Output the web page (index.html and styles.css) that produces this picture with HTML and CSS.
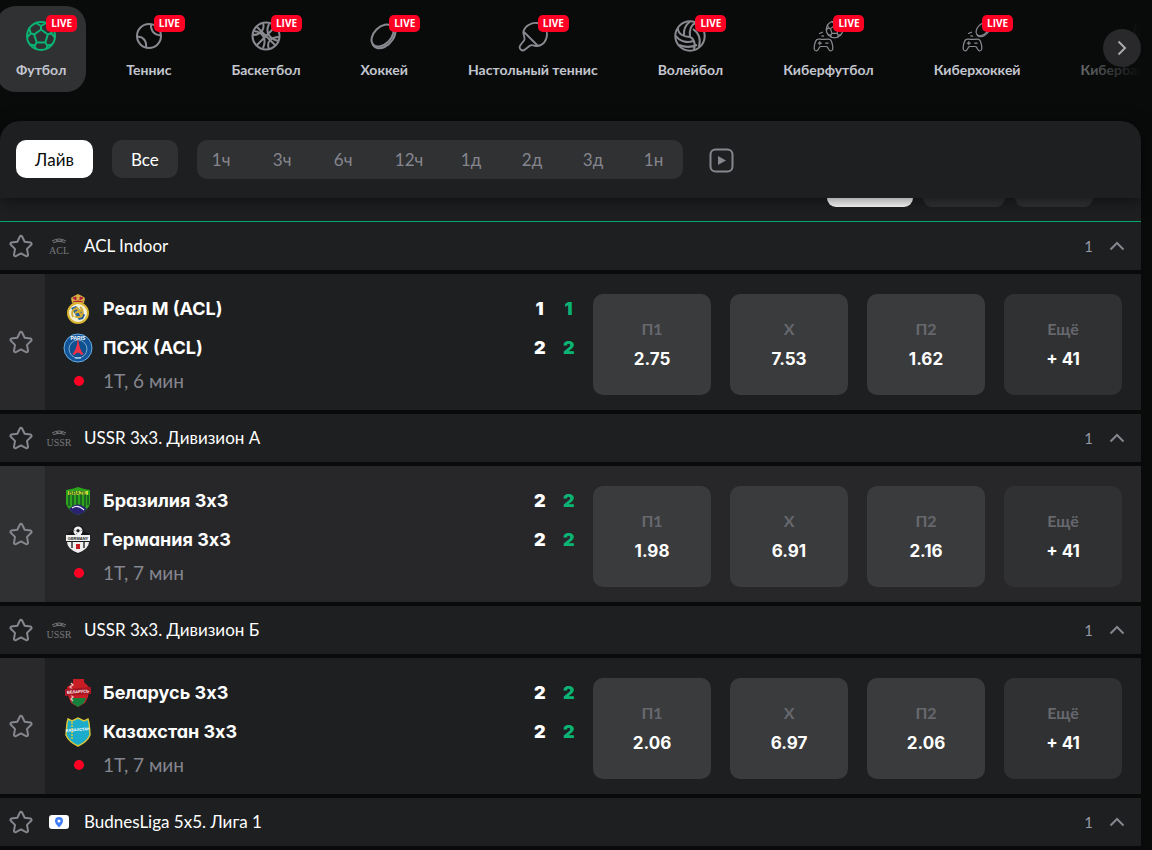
FILE: index.html
```html
<!DOCTYPE html>
<html lang="ru">
<head>
<meta charset="utf-8">
<title>Футбол — Лайв</title>
<link rel="stylesheet" href="styles.css">
</head>
<body>
<svg class="sprite" aria-hidden="true">
  <symbol id="star" viewBox="0 0 24 24"><path d="M12 1.800c.5 0 .9.3 1.100.7l2.600 5.300 5.800.8c1.100.2 1.500 1.400.7 2.200l-4.200 4.100 1 5.800c.2 1.100-.9 1.900-1.900 1.400L12 19.400l-5.100 2.700c-1 .5-2.100-.3-1.900-1.400l1-5.800-4.200-4.100c-.8-.8-.4-2 .7-2.200l5.800-.8 2.600-5.300c.2-.4.6-.7 1.100-.7z" fill="none" stroke="currentColor" stroke-width="2" stroke-linejoin="round"/></symbol>
  <symbol id="chevron" viewBox="0 0 16 10"><path d="M1.500 8.500 8 2l6.500 6.500" fill="none" stroke="currentColor" stroke-width="2"/></symbol>
  <symbol id="football" viewBox="0 0 32 32"><g fill="none" stroke="currentColor" stroke-width="2" stroke-linejoin="round"><circle cx="16" cy="16" r="14"/><path d="m16 9.500 6.800 5-2.500 8h-8.600l-2.500-8zM16 9.500V6l-5-3M16 6l5-3M22.800 14.500l3.500-1.200L28 7.500M26.300 13.300l3.500 4M20.300 22.500l2 3-1 3.500M22.300 25.500l5.200-1M11.700 22.500l-2 3 1 3.500M9.700 25.500l-5.200-1M9.200 14.500l-3.500-1.200L4 7.500M5.700 13.300l-3.500 4"/></g></symbol>
  <symbol id="hockey" viewBox="0 0 32 32"><g fill="none" stroke="currentColor" stroke-width="2"><ellipse cx="14.500" cy="15.500" rx="13" ry="8.500" transform="rotate(-45 14.500 15.500)"/><path d="M4.500 24c1.500 4 7 5.500 12 3 7-3.500 11.500-11 11-17-.4-2-1.500-3.500-3-4"/></g></symbol>
  <symbol id="gamepad" viewBox="0 0 32 32"><g fill="none" stroke="currentColor" stroke-width="1.200" stroke-linecap="round"><path d="M5 19.500c1.500-.8 3-.2 4.200-.2h4.600c1.200 0 2.700-.6 4.200.2 2.200 1.400 3.500 9 2.300 10.500-1 1.300-2.600 1-3.300-.2l-1.600-2.700c-.3-.4-.6-.6-1.100-.6H8.700c-.5 0-.8.2-1.100.6L6 29.800c-.7 1.200-2.300 1.500-3.300.2C1.500 28.500 2.800 20.900 5 19.500zM6.300 23.200h3M7.800 21.700v3M13.700 23.200h2.400M7.500 13.500l3-1.300M9.800 15.800l1.800.4"/></g></symbol>
  <symbol id="laurel" viewBox="0 0 26 18"><path d="M6 4q7-4 14 0M7 5.500q6-2.500 12 0M10 3q3 3 7 0" fill="none" stroke="currentColor"/></symbol>
</svg>
<main class="page">
  <nav class="sports" aria-label="Виды спорта">
    <a class="sport sport-active" href="#"><span class="sport-icon"><svg viewBox="0 0 32 32"><use href="#football"/></svg><span class="live">LIVE</span></span>Футбол</a>
    <a class="sport" href="#"><span class="sport-icon"><svg viewBox="0 0 32 32"><g fill="none" stroke="currentColor" stroke-width="2"><circle cx="16" cy="16" r="12"/><path d="M4 17c6-1 10 4 9 11M18 4c-.5 7 4 12 10 11"/></g></svg><span class="live">LIVE</span></span>Теннис</a>
    <a class="sport" href="#"><span class="sport-icon"><svg viewBox="0 0 32 32"><g fill="none" stroke="currentColor" stroke-width="2"><circle cx="16" cy="16" r="13.500"/><path d="M6.500 6.500l19 19M25.500 6.500l-19 19M13 3c2 6-2 12-10.500 12M29 17c-8 0-13 5-10 12M4 11c9 1 13 8 9 17M19 4c-4 8 0 15 9.500 17"/></g></svg><span class="live">LIVE</span></span>Баскетбол</a>
    <a class="sport" href="#"><span class="sport-icon"><svg viewBox="0 0 32 32"><use href="#hockey"/></svg><span class="live">LIVE</span></span>Хоккей</a>
    <a class="sport" href="#"><span class="sport-icon"><svg viewBox="0 0 32 32"><path d="M6.500 11C8 6 14 2.500 20 3c6 .5 10 6 10 11 0 7-4.500 12-10 12-3 0-5-2-7.500 0L8 29.500c-3 2.500-7-1-4.500-4.500L7 20.500c2-2.500-1.500-5.500-.5-9.500zM7 12l14 14" fill="none" stroke="currentColor" stroke-width="1.800"/></svg><span class="live">LIVE</span></span>Настольный теннис</a>
    <a class="sport" href="#"><span class="sport-icon"><svg viewBox="0 0 32 32"><g fill="none" stroke="currentColor" stroke-width="2"><circle cx="16" cy="16" r="14.700"/><path d="M16 17C15 10 17 5 22 2.500M10 15c-.5-5 1.500-10 6-13.500M4 8c-.5 6 6 9 12 9M2 16c4 6 12 7 17 5M5 25c6 2.500 12 2.500 18 0M16 17c3 1 6 5 4 13M19 9c6 4 8 10 6 18"/></g></svg><span class="live">LIVE</span></span>Волейбол</a>
    <a class="sport" href="#"><span class="sport-icon"><svg viewBox="0 0 32 32"><use href="#gamepad"/><use href="#football" x="13" width="19" height="19"/></svg><span class="live">LIVE</span></span>Киберфутбол</a>
    <a class="sport" href="#"><span class="sport-icon"><svg viewBox="0 0 32 32"><use href="#gamepad"/><use href="#hockey" x="13" width="19" height="19"/></svg><span class="live">LIVE</span></span>Киберхоккей</a>
    <a class="sport" href="#"><span class="sport-icon"><svg viewBox="0 0 32 32"><use href="#gamepad"/><use href="#football" x="13" width="19" height="19"/></svg></span>Кибербаскетбол</a>
    <span class="fade"></span>
    <button class="next" aria-label="Дальше"><svg viewBox="0 0 10 16"><path d="m1.500 1.500 6.500 6.500-6.500 6.500" fill="none" stroke="currentColor" stroke-width="2"/></svg></button>
  </nav>

  <section class="filters" aria-label="Фильтры">
    <button class="chip chip-live">Лайв</button>
    <button class="chip">Все</button>
    <div class="periods">
      <button>1ч</button><button>3ч</button><button>6ч</button><button class="wide">12ч</button><button>1д</button><button>2д</button><button>3д</button><button>1н</button>
    </div>
    <button class="video" aria-label="Видео"><svg viewBox="0 0 25 25"><rect x="1.500" y="1.500" width="22" height="22" rx="5" fill="none" stroke="currentColor" stroke-width="2"/><path d="m9 8 8 4.500L9 17z" fill="currentColor"/></svg></button>
  </section>

  <div class="tabs"><button class="tab tab-on" aria-label="Вкладка 1"></button><button class="tab tab-mid" aria-label="Вкладка 2"></button><button class="tab" aria-label="Вкладка 3"></button></div>

  <section class="list">
    <header class="league">
      <button class="fav" aria-label="В избранное"><svg><use href="#star"/></svg></button>
      <svg class="league-logo" viewBox="0 0 26 18"><use href="#laurel"/><text x="13" y="17" text-anchor="middle" class="crest-serif" font-size="10">ACL</text></svg>
      <h2>ACL Indoor</h2><span class="count">1</span>
      <button class="toggle" aria-label="Свернуть"><svg><use href="#chevron"/></svg></button>
    </header>
    <article class="match">
      <button class="fav" aria-label="В избранное"><svg><use href="#star"/></svg></button>
      <div class="teams">
        <div class="team"><svg class="crest" viewBox="0 0 30 30"><path d="M9 9 8 4l3-2 4-2 4 2 3 2-1 5z" fill="#d5ae3e"/><path d="m10 4 3 2V3zm7 2 3-2-3-1zm-7 2q5-2 10 0" fill="#b51f3c" stroke="#b51f3c"/><circle cx="15" cy="19" r="10" fill="#f3f0d8" stroke="#d9b532" stroke-width="2"/><path d="m8 14 5-2 9 9-2 4-4 1z" fill="#245e9c"/><path d="M10 23q-3-7 4-9l5 9M12 19l7-3M17 13q4 3 2 8-3 4-7 1" fill="none" stroke="#d1ab36" stroke-width="2"/></svg><span class="name">Реал М (ACL)</span><b>1</b><b class="now">1</b></div>
        <div class="team"><svg class="crest" viewBox="0 0 30 30"><circle cx="15" cy="15" r="14" fill="#125499" stroke="#6eafdf"/><circle cx="15" cy="16" r="9" fill="#11508f" stroke="#7aacd1"/><path d="M14.500 7h1q.5 9 5 14l-2 1q-3.500-5-7 0l-2-1q4.500-5 5-14z" fill="#ed3045"/><path d="m13 15 4 0" stroke="#ed3045" stroke-width="2"/><text x="15" y="7" text-anchor="middle" class="crest-sans" font-size="5" fill="#fff">PARIS</text><path d="m12 25 6 0" stroke="#d9e7f3"/></svg><span class="name">ПСЖ (ACL)</span><b>2</b><b class="now">2</b></div>
        <div class="clock"><i></i><span>1Т, 6 мин</span></div>
      </div>
      <div class="odds">
        <button>П1<strong>2.75</strong></button><button>X<strong>7.53</strong></button><button>П2<strong>1.62</strong></button><button class="more">Ещё<strong>+ 41</strong></button>
      </div>
    </article>

    <header class="league">
      <button class="fav" aria-label="В избранное"><svg><use href="#star"/></svg></button>
      <svg class="league-logo" viewBox="0 0 26 18"><use href="#laurel"/><text x="13" y="17" text-anchor="middle" class="crest-serif" font-size="10">USSR</text></svg>
      <h2>USSR 3x3. Дивизион А</h2><span class="count">1</span>
      <button class="toggle" aria-label="Свернуть"><svg><use href="#chevron"/></svg></button>
    </header>
    <article class="match match-hover">
      <button class="fav" aria-label="В избранное"><svg><use href="#star"/></svg></button>
      <div class="teams">
        <div class="team"><svg class="crest" viewBox="0 0 30 30"><path d="M3 4q7-1 12-3 5 2 12 3v14q-3 8-12 11Q6 26 3 18z" fill="#2ca51c"/><path d="M6 9v11M10 9v12M14 9v11M18 9v11M22 9v12M25 9v10" stroke="#174e27" stroke-width="1.500"/><path d="M6 23q9-9 18 0l-4 4-5 2-5-2z" fill="#2a2170"/><path d="M9 22q6-4 12 2" fill="none" stroke="#e8eaf6" stroke-width="1.200"/><path d="M5 5h20v4H5z" fill="#c9dc38"/><text x="15" y="9" text-anchor="middle" class="crest-sans" font-size="5" fill="#235d22">BRAZIL</text></svg><span class="name">Бразилия 3x3</span><b>2</b><b class="now">2</b></div>
        <div class="team"><svg class="crest" viewBox="0 0 30 30"><path d="M4 9 9 6l2-5h8l2 5 5 3v10q-3 7-11 10Q7 26 4 19z" fill="#15171a"/><circle cx="15" cy="6" r="4.500" fill="#f2f2f2"/><path d="m15 4 1.500 1.200-.6 1.800h-1.800l-.6-1.800zM11 5l1.500 1M19 5l-1.500 1M13 9.500l1-1.500" fill="#202124" stroke="#202124" stroke-width=".5"/><path d="M4 17h22q0 7-11 11Q4 24 4 17z" fill="#eee"/><path d="M9 17v6M21 17v6" stroke="#333" stroke-width="1.500"/><path d="M13 19h4v5h-4z" fill="#c51e22"/><path d="M3 10h24v6H3z" fill="#f1f1f1"/><text x="15" y="15" text-anchor="middle" class="crest-sans" font-size="4" fill="#202124">GERMANY</text></svg><span class="name">Германия 3x3</span><b>2</b><b class="now">2</b></div>
        <div class="clock"><i></i><span>1Т, 7 мин</span></div>
      </div>
      <div class="odds">
        <button>П1<strong>1.98</strong></button><button>X<strong>6.91</strong></button><button>П2<strong>2.16</strong></button><button class="more">Ещё<strong>+ 41</strong></button>
      </div>
    </article>

    <header class="league">
      <button class="fav" aria-label="В избранное"><svg><use href="#star"/></svg></button>
      <svg class="league-logo" viewBox="0 0 26 18"><use href="#laurel"/><text x="13" y="17" text-anchor="middle" class="crest-serif" font-size="10">USSR</text></svg>
      <h2>USSR 3x3. Дивизион Б</h2><span class="count">1</span>
      <button class="toggle" aria-label="Свернуть"><svg><use href="#chevron"/></svg></button>
    </header>
    <article class="match">
      <button class="fav" aria-label="В избранное"><svg><use href="#star"/></svg></button>
      <div class="teams">
        <div class="team"><svg class="crest" viewBox="0 0 30 30"><path d="M10 1h11v3l5 5-1 10-3 6-7 4-7-4-4-10V9l6-4z" fill="#c91d25"/><path d="M8 20h15l-2 5-6 4-6-4z" fill="#16813b"/><path d="m8 5 2 2-3 2 2 2-3 2m2 4 2 2-2 2 2 2" fill="none" stroke="#e8bcbc" stroke-width="1.300"/><path d="m2 11 26-2v7L2 18z" fill="#a91623"/><text x="15" y="15" text-anchor="middle" class="crest-sans" font-size="4" fill="#fff" transform="rotate(-4 15 15)">БЕЛАРУСЬ</text></svg><span class="name">Беларусь 3x3</span><b>2</b><b class="now">2</b></div>
        <div class="team"><svg class="crest" viewBox="0 0 30 30"><path d="M5 2 9 4l6-3 6 3 4-2 1 4 1 12q-3 7-12 11Q6 25 3 18L4 6z" fill="#1baccc" stroke="#d6c63a" stroke-width="1.500"/><path d="M9 5v18" stroke="#d6c63a" stroke-width="1.500" stroke-dasharray="2 1"/><text x="15" y="14" text-anchor="middle" class="crest-sans" font-size="4" fill="#fff" transform="rotate(-5 15 14)">КАЗАХСТАН</text></svg><span class="name">Казахстан 3x3</span><b>2</b><b class="now">2</b></div>
        <div class="clock"><i></i><span>1Т, 7 мин</span></div>
      </div>
      <div class="odds">
        <button>П1<strong>2.06</strong></button><button>X<strong>6.97</strong></button><button>П2<strong>2.06</strong></button><button class="more">Ещё<strong>+ 41</strong></button>
      </div>
    </article>

    <header class="league">
      <button class="fav" aria-label="В избранное"><svg><use href="#star"/></svg></button>
      <svg class="league-logo" viewBox="0 0 26 18"><rect x="3" y="2" width="20" height="14" rx="3" fill="#fff"/><path d="M13 14.500q-4-4-4-6.500a4 4 0 0 1 8 0q0 2.500-4 6.500z" fill="#3e7df5"/><circle cx="13" cy="8" r="1.500" fill="#fff"/></svg>
      <h2>BudnesLiga 5x5. Лига 1</h2><span class="count">1</span>
      <button class="toggle" aria-label="Свернуть"><svg><use href="#chevron"/></svg></button>
    </header>
  </section>
</main>
</body>
</html>
```
FILE: styles.css
```css
* { box-sizing: border-box; }
body {
  margin: 0;
  background: #090b0a;
  color: #fff;
  font-family: Lato, "Open Sans", sans-serif;
}
button {
  border: 0;
  padding: 0;
  background: none;
  color: inherit;
  font: inherit;
  cursor: pointer;
}
svg { display: block; }
.sprite { position: absolute; width: 0; height: 0; }
.page { margin-right: 11px; }

.sports {
  position: relative;
  display: flex;
  gap: 20px;
  margin-left: -4px;
  padding-top: 6px;
  overflow: hidden;
}
.sport {
  flex: none;
  height: 86px;
  padding: 14px 20px 0;
  border-radius: 20px;
  color: #c3c6cf;
  font-size: 14px;
  font-weight: 700;
  line-height: 20px;
  text-decoration: none;
}
.sport-active { background: #303133; }
.sport-icon {
  position: relative;
  display: block;
  width: 32px;
  height: 32px;
  margin: 0 auto 8px;
  color: #898a91;
}
.sport-icon > svg { width: 32px; height: 32px; }
.sport-active .sport-icon { color: #0bb374; }
.live {
  position: absolute;
  left: 21px;
  top: -5px;
  width: 31px;
  height: 17px;
  border-radius: 5px;
  background: #ff0024;
  color: #fff;
  font: 700 10px/17px "Open Sans", sans-serif;
  text-align: center;
}
.fade {
  position: absolute;
  top: 0;
  right: 0;
  bottom: 0;
  width: 120px;
  background: linear-gradient(90deg, #090b0a00, #090b0a);
}
.next {
  position: absolute;
  top: 29px;
  right: 0;
  width: 38px;
  height: 38px;
  border-radius: 50%;
  background: #29292c;
  color: #a9aaae;
}
.next svg { width: 10px; height: 16px; margin: 0 auto; }

.filters {
  position: relative;
  display: flex;
  align-items: flex-start;
  gap: 19px;
  height: 77px;
  margin-top: 29px;
  padding: 19px 16px;
  border-radius: 20px 20px 0 0;
  background: #1e1f21;
  box-shadow: 0 2px 16px #0008;
  font-size: 17px;
}
.chip {
  height: 38px;
  padding: 0 19px;
  border-radius: 10px;
  background: #303133;
}
.chip-live { min-width: 77px; background: #fff; color: #090b0a; }
.periods {
  display: flex;
  gap: 32px;
  height: 39px;
  padding: 0 10px 0 15px;
  border-radius: 10px;
  background: #303133;
  color: #85868e;
}
.periods button { min-width: 29px; text-align: left; }
.periods .wide { min-width: 34px; }
.video { margin: 8px 0 0 7px; color: #85868e; }
.video svg { width: 25px; height: 25px; }

.tabs {
  display: flex;
  justify-content: flex-end;
  gap: 10px;
  height: 24px;
  padding-right: 48px;
  border-bottom: 1px solid #00a86b;
  background: #1e1f21;
}
.tab {
  width: 78px;
  height: 9px;
  border-radius: 0 0 10px 10px;
  background: #303133;
}
.tab-mid { width: 82px; }
.tab-on { width: 86px; background: #fff; }

.list { display: grid; gap: 4px; }
.league {
  display: flex;
  align-items: center;
  height: 48px;
  padding-right: 16px;
  background: #1e1f21;
}
.fav { flex: none; width: 45px; color: #85868e; }
.fav svg { width: 24px; height: 24px; margin-left: 9px; }
.league-logo { width: 26px; height: 18px; margin: 0 12px 0 1px; color: #77787c; }
.league h2 { flex: 1; margin: 0; font-size: 17px; font-weight: 400; line-height: 20px; }
.count { color: #9698a4; font-size: 15px; }
.toggle { margin-left: 16px; color: #85868e; }
.toggle svg { width: 16px; height: 10px; }
.crest-serif { font-family: "Liberation Serif", serif; fill: currentColor; }
.crest-sans { font-family: "Liberation Sans", sans-serif; font-weight: 700; }

.match { display: flex; height: 136px; background: #1e1f21; }
.match > .fav { background: #29292c; }
.match-hover { background: #272729; }
.match-hover > .fav { background: #303133; }
.teams { flex: 1; padding: 15px 19px 0 18px; }
.team {
  display: grid;
  grid-template-columns: 30px 1fr 11px 11px;
  column-gap: 18px;
  align-items: center;
  height: 39px;
  font: 700 18px/39px Inter, sans-serif;
  font-feature-settings: "cv11";
}
.crest { width: 30px; height: 30px; }
.name { margin-left: -8px; }
.team b { text-align: center; }
.now { color: #0bb374; }
.clock { display: flex; align-items: center; height: 27px; color: #85868e; font-size: 19px; }
.clock i { width: 10px; height: 10px; margin: 0 19px 0 11px; border-radius: 50%; background: #ff0024; }
.odds {
  display: grid;
  grid-template-columns: repeat(4, 118px);
  gap: 19px;
  padding: 20px 19px 15px 0;
}
.odds button {
  border-radius: 10px;
  background: #3a3b3d;
  color: #67686d;
  font-size: 16px;
  font-weight: 700;
  line-height: 28px;
}
.odds strong {
  display: block;
  color: #fff;
  font: 700 17px/32px Inter, sans-serif;
}
.odds .more { background: #303133; }
```
